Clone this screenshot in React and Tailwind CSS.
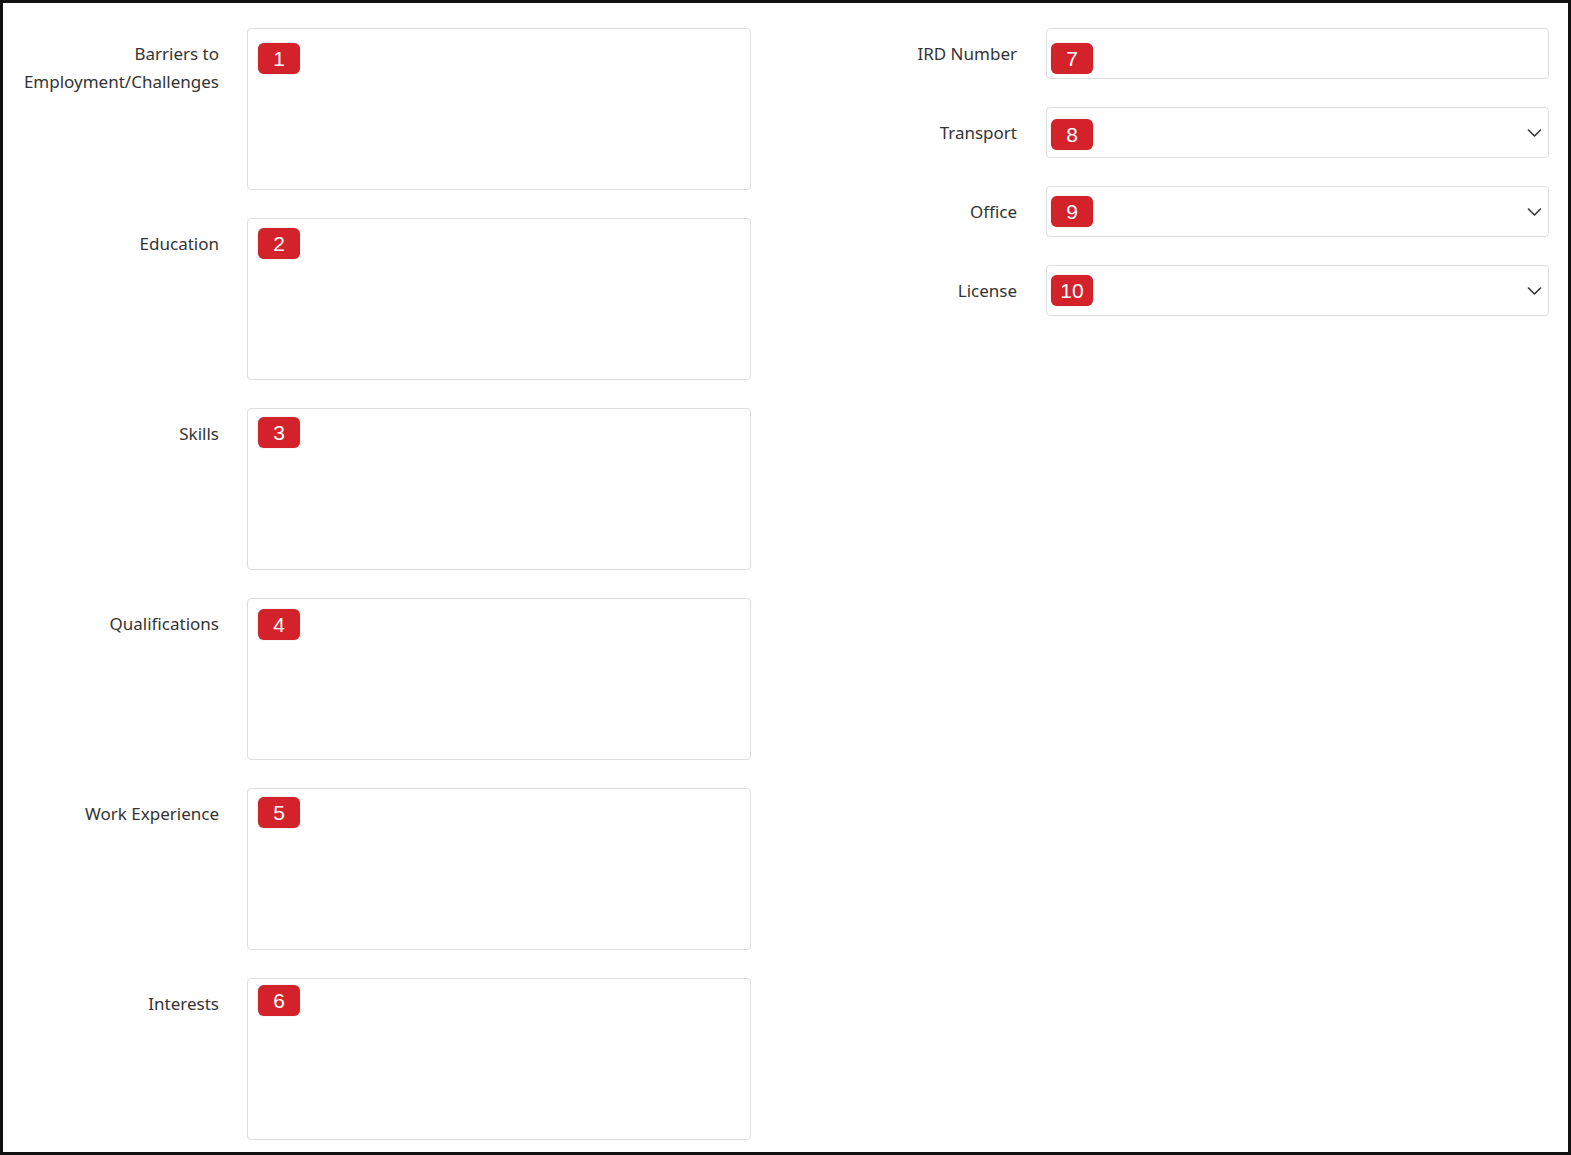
import React from 'react';

// badge offsets are measured off the screenshot, they are not all equal
const leftFields = [
  { label: ['Barriers to', 'Employment/Challenges'], n: 1, top: 'top-[14px]' },
  { label: ['Education'], n: 2, top: 'top-[9px]' },
  { label: ['Skills'], n: 3, top: 'top-[8px]' },
  { label: ['Qualifications'], n: 4, top: 'top-[10px]' },
  { label: ['Work Experience'], n: 5, top: 'top-[8px]' },
  { label: ['Interests'], n: 6, top: 'top-[6px]' },
];

const rightFields = [
  { label: 'IRD Number', n: 7, select: false, top: 'top-[14px]' },
  { label: 'Transport', n: 8, select: true, top: 'top-[11px]' },
  { label: 'Office', n: 9, select: true, top: 'top-[9px]' },
  { label: 'License', n: 10, select: true, top: 'top-[9px]' },
];

const Badge = ({ n, className }) => (
  <span
    className={`absolute flex h-[31px] w-[42px] items-center justify-center rounded-[6px] bg-[#d3222a] text-[21px] leading-none text-white shadow-[0_0_1px_rgba(0,0,0,0.4)] ${className}`}
    style={{ fontFamily: '"Liberation Sans", Arial, sans-serif' }}
  >
    {n}
  </span>
);

const Chevron = () => (
  <svg
    className="absolute right-[6px] top-1/2 -translate-y-1/2"
    width="15"
    height="9"
    viewBox="0 0 15 9"
    fill="none"
  >
    <path d="M1.5 1.5l6 6 6-6" stroke="#333" strokeWidth="1.6" strokeLinecap="round" strokeLinejoin="round" />
  </svg>
);

const App = () => {
  return (
    <div
      className="h-[1155px] w-[1571px] overflow-hidden border-[3px] border-[#111] bg-white text-[17px] leading-[28px] text-[#333]"
      style={{ fontFamily: '"Noto Sans", "Open Sans", sans-serif' }}
    >
      <div className="flex pt-[25px]">
        <div className="flex w-[748px] flex-col gap-[28px]">
          {leftFields.map((f) => (
            <div key={f.n} className="flex gap-[28px]">
              <label className="w-[216px] pt-[12px] text-right">
                {f.label.map((l) => (
                  <div key={l}>{l}</div>
                ))}
              </label>
              <div className="relative h-[162px] w-[504px] rounded-[4px] border border-[#dedede] bg-white">
                <Badge n={f.n} className={`left-[10px] ${f.top}`} />
              </div>
            </div>
          ))}
        </div>
        <div className="flex flex-1 flex-col gap-[28px]">
          {rightFields.map((f) => (
            <div key={f.n} className="flex gap-[29px]">
              <label className="w-[266px] pt-[12px] text-right">{f.label}</label>
              <div className="relative h-[51px] w-[503px] rounded-[4px] border border-[#dedede] bg-white">
                <Badge n={f.n} className={`left-[4px] ${f.top}`} />
                {f.select && <Chevron />}
              </div>
            </div>
          ))}
        </div>
      </div>
    </div>
  );
};

export default App;
